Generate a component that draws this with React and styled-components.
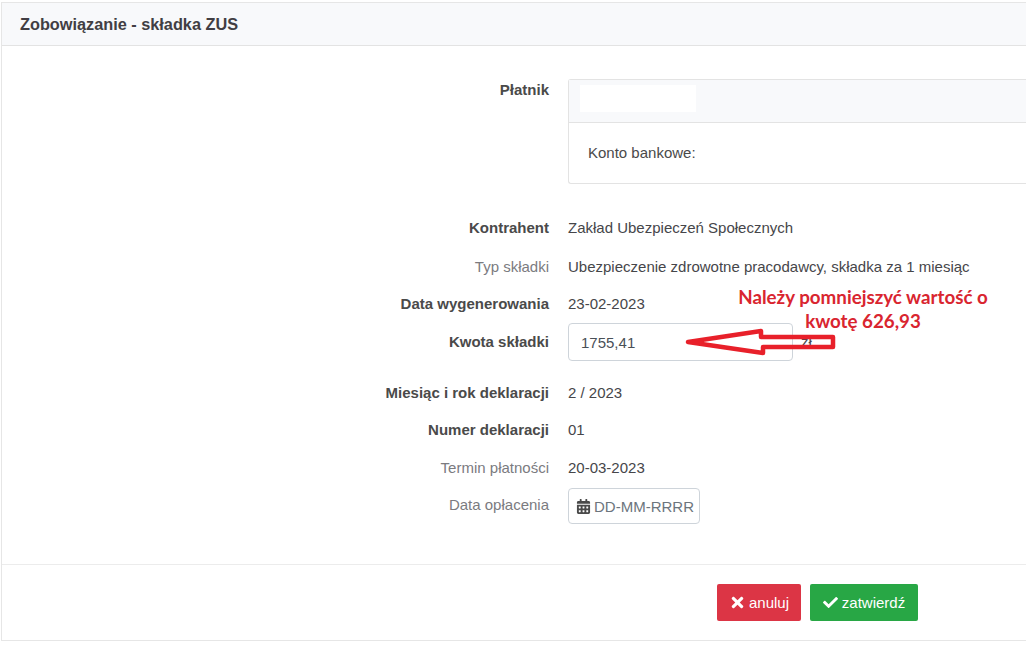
import React from 'react'
import styled, { createGlobalStyle } from 'styled-components'
import { FaCalendarAlt, FaCheck, FaTimes } from 'react-icons/fa'

const Global = createGlobalStyle`
  html, body {
    margin: 0;
    background: #fff;
    overflow: hidden;
  }
  body {
    font-family: "Liberation Sans", Arial, sans-serif;
    font-size: 15px;
    line-height: 21px;
    color: #4a4a4a;
  }
`

const Page = styled.div`
  position: relative;
  width: 1026px;
  height: 648px;
  padding: 2px 0 0 1px;
  box-sizing: border-box;
  overflow: hidden;
`
const Card = styled.div`
  width: 1060px;
  height: 639px;
  box-sizing: border-box;
  border: 1px solid #e6e6e6;
  display: flex;
  flex-direction: column;
`
const CardHeader = styled.div`
  height: 43px;
  box-sizing: border-box;
  flex: none;
  display: flex;
  align-items: center;
  padding-left: 18px;
  background: #f8f9fb;
  border-bottom: 1px solid #e3e3e3;
`
const Heading = styled.h1`
  margin: 0;
  font-size: 16.3px;
  font-weight: 700;
  color: #413e43;
`
const CardBody = styled.div`
  flex: 1;
  padding-top: 33px;
`
const Row = styled.div`
  display: grid;
  grid-template-columns: 547px 1fr;
  column-gap: 19px;
  align-items: ${p => (p.$top ? 'start' : 'center')};
  min-height: ${p => p.$height || 38}px;
  margin-bottom: ${p => p.$after || 0}px;
`
const Label = styled.div`
  text-align: right;
  font-weight: ${p => (p.$muted ? 400 : 700)};
  color: ${p => (p.$muted ? '#7b7b7f' : '#4a4a4a')};
  padding-bottom: ${p => p.$lift || 0}px;
`
const Value = styled.div`
  color: #46464a;
  padding-bottom: ${p => p.$lift || 0}px;
`
const Panel = styled.div`
  height: 105px;
  box-sizing: border-box;
  border: 1px solid #e3e3e3;
  border-right: none;
  border-radius: 3px 0 0 3px;
`
const PanelHead = styled.div`
  height: 43px;
  box-sizing: border-box;
  padding: 5px 11px;
  background: #f8f9fb;
  border-bottom: 1px solid #e3e3e3;
`
const Redaction = styled.div`
  width: 116px;
  height: 27px;
  background: #fff;
`
const PanelBody = styled.div`
  padding: 19px;
  line-height: 21px;
`
const AmountField = styled.div`
  width: 225px;
  height: 38px;
  box-sizing: border-box;
  border: 1px solid #ced4da;
  border-radius: 4px;
  padding: 0 12px;
  display: flex;
  align-items: center;
  color: #495057;
  position: relative;
`
const Unit = styled.span`
  position: absolute;
  left: 232px;
  top: 7px;
  color: #46464a;
`
const DateField = styled.div`
  width: 132px;
  height: 36px;
  box-sizing: border-box;
  border: 1px solid #ced4da;
  border-radius: 4px;
  padding-left: 7px;
  display: flex;
  align-items: center;
  gap: 3px;
  color: #6c757d;
  white-space: nowrap;
  overflow: hidden;
  svg {
    color: #4a4a4a;
    flex: none;
  }
`
const CardFooter = styled.div`
  flex: none;
  height: 76px;
  box-sizing: border-box;
  border-top: 1px solid #ececec;
  padding: 19px 0 0 715px;
  display: flex;
  align-items: flex-start;
  gap: 9px;
`
const Button = styled.button`
  height: 37px;
  width: ${p => p.$width}px;
  border: none;
  border-radius: 2px;
  background: ${p => p.$bg};
  color: #fff;
  font: inherit;
  padding: 0;
  display: flex;
  align-items: center;
  justify-content: center;
  gap: ${p => p.$gap}px;
`
const Note = styled.div`
  position: absolute;
  left: 716px;
  top: 285px;
  width: 294px;
  text-align: center;
  font-family: Lato, "Open Sans", sans-serif;
  font-weight: 700;
  font-size: 18.75px;
  line-height: 24px;
  color: #d9252f;
  white-space: nowrap;
`
const ArrowMark = styled.svg`
  position: absolute;
  left: 680px;
  top: 322px;
`

export default function App() {
  return (
    <Page>
      <Global />
      <Card>
        <CardHeader>
          <Heading>Zobowiązanie - składka ZUS</Heading>
        </CardHeader>
        <CardBody>
          <Row $top $height={105} $after={25}>
            <Label>Płatnik</Label>
            <Panel>
              <PanelHead>
                <Redaction />
              </PanelHead>
              <PanelBody>Konto bankowe:</PanelBody>
            </Panel>
          </Row>
          <Row>
            <Label $lift={2}>Kontrahent</Label>
            <Value $lift={2}>Zakład Ubezpieczeń Społecznych</Value>
          </Row>
          <Row>
            <Label $muted>Typ składki</Label>
            <Value>Ubezpieczenie zdrowotne pracodawcy, składka za 1 miesiąc</Value>
          </Row>
          <Row>
            <Label $lift={2}>Data wygenerowania</Label>
            <Value $lift={2}>23-02-2023</Value>
          </Row>
          <Row $after={12}>
            <Label $lift={2}>Kwota składki</Label>
            <AmountField>
              1755,41
              <Unit>zł</Unit>
            </AmountField>
          </Row>
          <Row>
            <Label>Miesiąc i rok deklaracji</Label>
            <Value>2 / 2023</Value>
          </Row>
          <Row>
            <Label $lift={2}>Numer deklaracji</Label>
            <Value $lift={2}>01</Value>
          </Row>
          <Row>
            <Label $muted $lift={2}>Termin płatności</Label>
            <Value $lift={2}>20-03-2023</Value>
          </Row>
          <Row>
            <Label $muted $lift={4}>Data opłacenia</Label>
            <DateField>
              <FaCalendarAlt size={15} />
              DD-MM-RRRR
            </DateField>
          </Row>
        </CardBody>
        <CardFooter>
          <Button $bg="#dc3545" $width={84} $gap={3}>
            <FaTimes size={17} />
            anuluj
          </Button>
          <Button $bg="#28a745" $width={108} $gap={4}>
            <FaCheck size={15} />
            zatwierdź
          </Button>
        </CardFooter>
      </Card>
      <Note>
        Należy pomniejszyć wartość o
        <br />
        kwotę 626,93
      </Note>
      <ArrowMark width="165" height="42" viewBox="0 0 165 42">
        <path
          d="M8 20 L81 9 L81 15 L153 15 L153 25 L83 25 L83 31 Z"
          fill="none"
          stroke="#e8202a"
          strokeWidth="4.5"
          strokeLinejoin="round"
        />
      </ArrowMark>
    </Page>
  )
}
